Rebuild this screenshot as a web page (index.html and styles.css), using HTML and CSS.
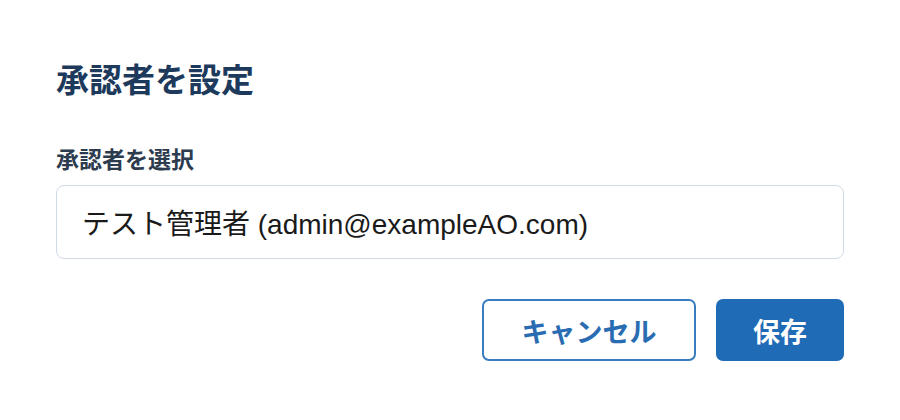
FILE: index.html
```html
<!DOCTYPE html>
<html lang="ja">
<head>
<meta charset="utf-8">
<link rel="stylesheet" href="styles.css">
</head>
<body>
<div class="dialog">
  <h1 class="title">承認者を設定</h1>
  <label class="label">承認者を選択</label>
  <div class="select">テスト管理者 (admin@exampleAO.com)</div>
  <div class="actions">
    <button class="btn btn-outline">キャンセル</button>
    <button class="btn btn-primary">保存</button>
  </div>
</div>
</body>
</html>
```
FILE: styles.css
```css
html, body {
  margin: 0;
  padding: 0;
  background: #ffffff;
}
body {
  font-family: "Liberation Sans", "Noto Sans CJK JP", sans-serif;
}
.dialog {
  width: 788px;
  padding: 57px 56px 0 56px;
  display: flex;
  flex-direction: column;
}
.title {
  margin: 0;
  font-size: 33px;
  line-height: 48px;
  font-weight: 700;
  color: #1d3a5c;
}
.label {
  margin-top: 40px;
  font-size: 23px;
  line-height: 30px;
  font-weight: 700;
  color: #2d3b4e;
}
.select {
  margin-top: 10px;
  box-sizing: border-box;
  height: 74px;
  border: 1px solid #d2dbe5;
  border-radius: 8px;
  padding: 0 25px;
  display: flex;
  align-items: center;
  font-size: 28px;
  color: #1a1a1a;
}
.actions {
  margin-top: 40px;
  display: flex;
  justify-content: flex-end;
  gap: 20px;
}
.btn {
  height: 62px;
  border-radius: 7px;
  font-family: "Liberation Sans", "Noto Sans CJK JP", sans-serif;
  font-size: 27px;
  font-weight: 700;
  padding: 0;
  box-sizing: border-box;
}
.btn-outline {
  width: 214px;
  background: #ffffff;
  border: 2px solid #3a7dbf;
  color: #2a6cb2;
}
.btn-primary {
  width: 128px;
  background: #1f6bb5;
  border: none;
  color: #ffffff;
}
```
